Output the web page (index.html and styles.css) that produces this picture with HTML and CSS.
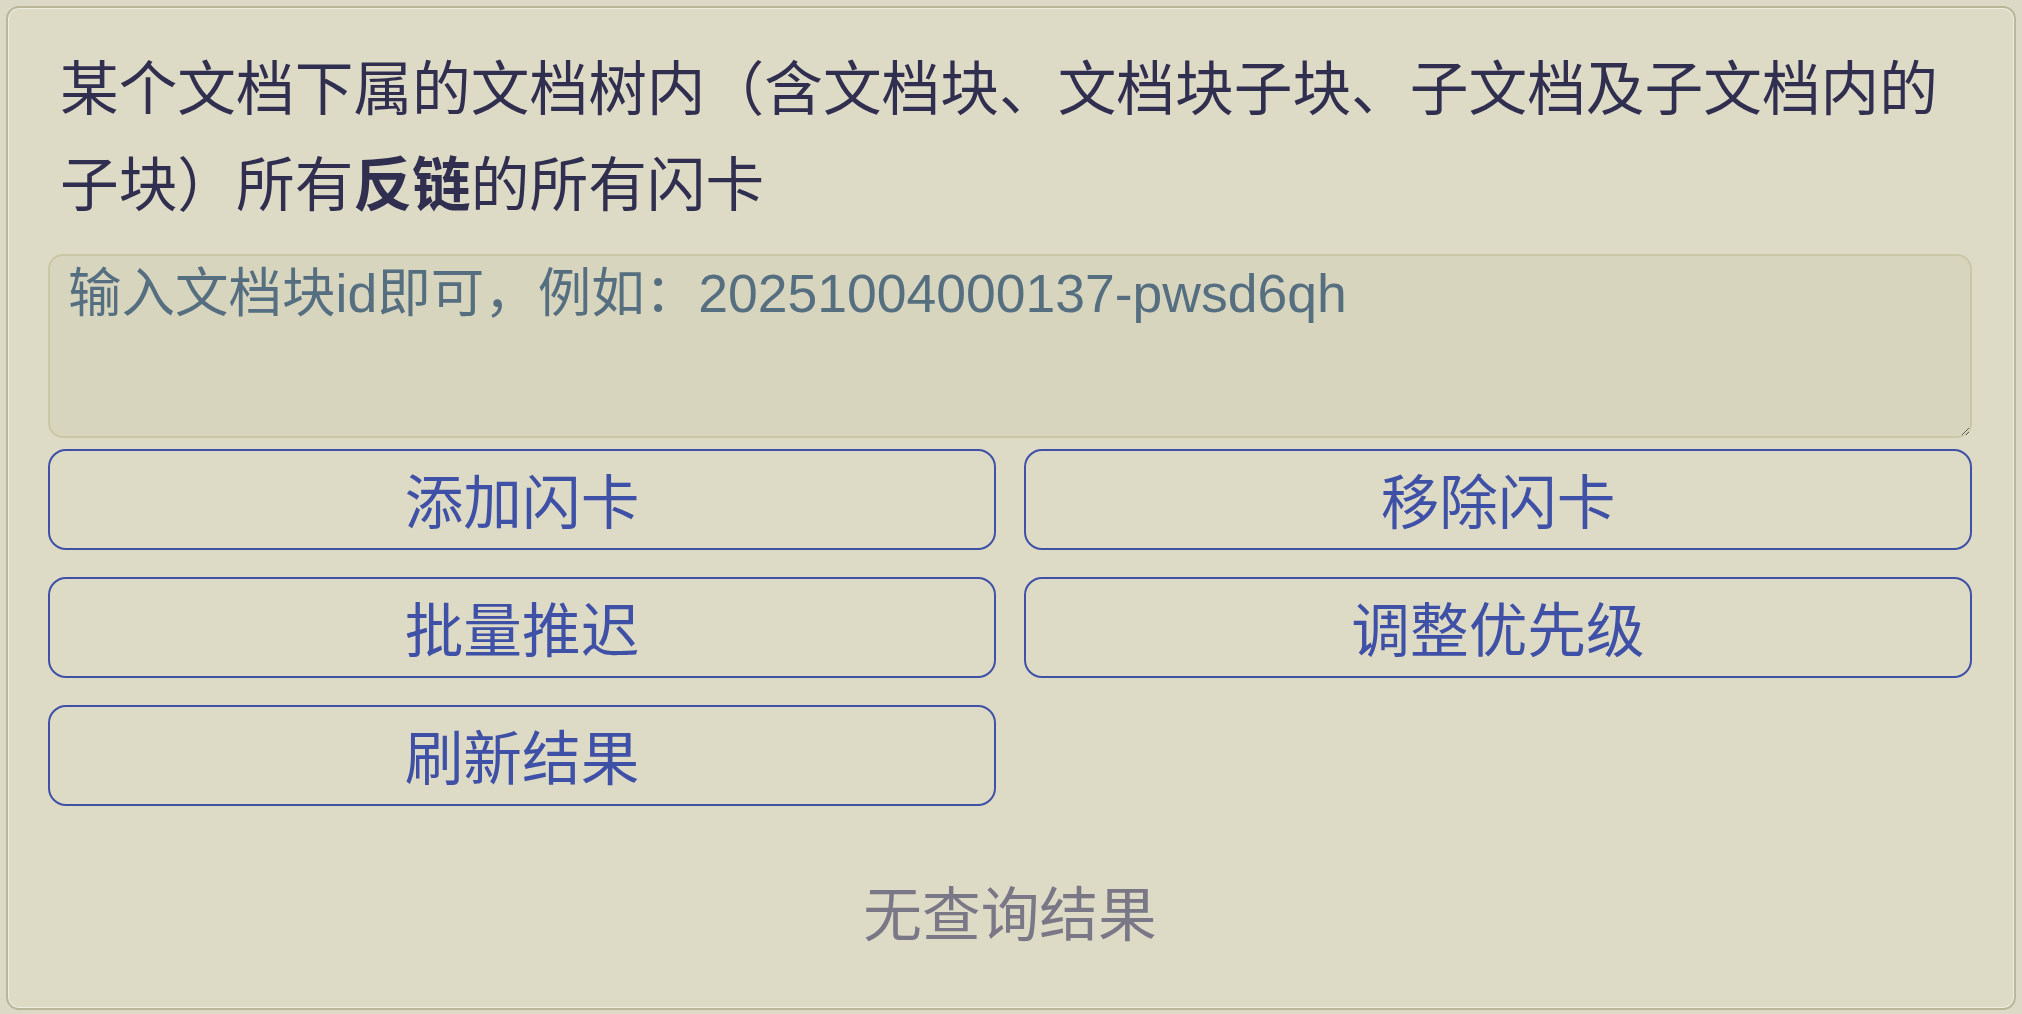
FILE: index.html
```html
<!DOCTYPE html>
<html lang="zh-CN">
<head>
<meta charset="utf-8">
<title>闪卡查询</title>
<link rel="stylesheet" href="styles.css">
</head>
<body>
<div class="card">
  <p class="title">某个文档下属的文档树内（含文档块、文档块子块、子文档及子文档内的子块）所有<b>反链</b>的所有闪卡</p>
  <textarea class="input" placeholder="输入文档块id即可，例如：20251004000137-pwsd6qh"></textarea>
  <div class="actions">
    <button class="btn">添加闪卡</button>
    <button class="btn">移除闪卡</button>
    <button class="btn">批量推迟</button>
    <button class="btn">调整优先级</button>
    <button class="btn">刷新结果</button>
  </div>
  <div class="empty">无查询结果</div>
</div>
</body>
</html>
```

FILE: styles.css
```css
html, body {
  margin: 0;
  padding: 0;
  background: #dcd9c7;
}
body {
  padding: 6px;
  font-family: "Noto Sans CJK SC", "Noto Sans", sans-serif;
}
.card {
  box-sizing: border-box;
  height: 1004px;
  background: #dddac6;
  border: 2px solid #b9b797;
  border-radius: 13px;
  box-shadow: inset 0 0 0 1px #eeede1;
  padding: 29px 42px 46px 40px;
  display: flex;
  flex-direction: column;
}
.title {
  margin: 0 0 25px;
  padding: 0 12px;
  font-size: 58.7px;
  line-height: 96px;
  color: #312f50;
}
.title b {
  font-weight: 700;
}
.input {
  box-sizing: border-box;
  display: block;
  width: 100%;
  height: 184px;
  margin: 0 0 11px;
  padding: 6px 18px 2px;
  background: #d8d5bf;
  border: 2px solid #c9c7a6;
  border-radius: 15px;
  font-family: "Liberation Sans", "Noto Sans CJK SC", sans-serif;
  font-size: 53.5px;
  line-height: 64px;
  color: #566f80;
  outline: none;
}
.input::placeholder {
  color: #566f80;
  opacity: 1;
}
.actions {
  display: grid;
  grid-template-columns: 1fr 1fr;
  column-gap: 28px;
  row-gap: 27px;
}
.btn {
  box-sizing: border-box;
  height: 101px;
  background: transparent;
  border: 2px solid #3f51a6;
  border-radius: 18px;
  color: #3f51a6;
  font-family: "Noto Sans CJK SC", sans-serif;
  font-size: 58.7px;
  line-height: 1;
  padding: 0;
  cursor: pointer;
}
.empty {
  margin-top: 57px;
  text-align: center;
  font-size: 58.7px;
  line-height: 96px;
  color: #7a7787;
}
```
